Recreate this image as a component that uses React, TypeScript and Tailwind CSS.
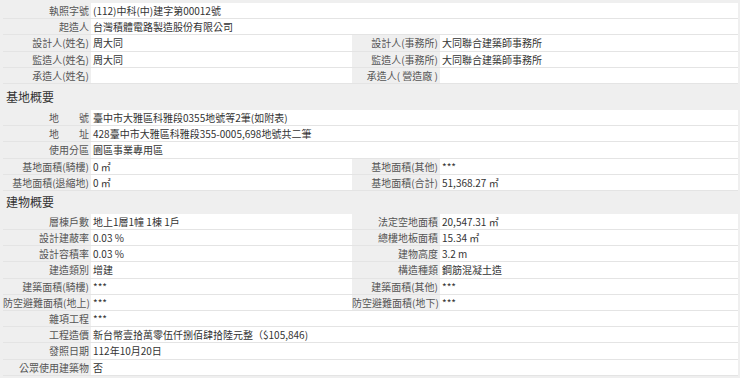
import React from 'react';

type Pair = [string, string];
type Row = { full?: Pair; left?: Pair; right?: Pair };

const font = { fontFamily: '"Noto Sans CJK TC", "Noto Sans", sans-serif' };

const top: Row[] = [
  { full: ['執照字號', '(112)中科(中)建字第00012號'] },
  { full: ['起造人', '台灣積體電路製造股份有限公司'] },
  { left: ['設計人(姓名)', '周大同'], right: ['設計人(事務所)', '大同聯合建築師事務所'] },
  { left: ['監造人(姓名)', '周大同'], right: ['監造人(事務所)', '大同聯合建築師事務所'] },
  { left: ['承造人(姓名)', ''], right: ['承造人( 營造廠 )', ''] },
];

const site: Row[] = [
  { full: ['地　　號', '臺中市大雅區科雅段0355地號等2筆(如附表)'] },
  { full: ['地　　址', '428臺中市大雅區科雅段355-0005,698地號共二筆'] },
  { full: ['使用分區', '園區事業專用區'] },
  { left: ['基地面積(騎樓)', '0 ㎡'], right: ['基地面積(其他)', '***'] },
  { left: ['基地面積(退縮地)', '0 ㎡'], right: ['基地面積(合計)', '51,368.27 ㎡'] },
];

const building: Row[] = [
  { left: ['層棟戶數', '地上1層1幢 1棟 1戶'], right: ['法定空地面積', '20,547.31 ㎡'] },
  { left: ['設計建蔽率', '0.03 %'], right: ['總樓地板面積', '15.34 ㎡'] },
  { left: ['設計容積率', '0.03 %'], right: ['建物高度', '3.2 m'] },
  { left: ['建造類別', '增建'], right: ['構造種類', '鋼筋混凝土造'] },
  { left: ['建築面積(騎樓)', '***'], right: ['建築面積(其他)', '***'] },
  { left: ['防空避難面積(地上)', '***'], right: ['防空避難面積(地下)', '***'] },
  { full: ['雜項工程', '***'] },
  { full: ['工程造價', '新台幣壹拾萬零伍仟捌佰肆拾陸元整（$105,846)'] },
  { full: ['發照日期', '112年10月20日'] },
  { full: ['公眾使用建築物', '否'] },
];

const Label: React.FC<{ text: string }> = ({ text }) => (
  <div className="w-[88px] shrink-0 bg-[#efefef] text-right pr-[2px] text-[#555] whitespace-pre">{text}</div>
);

const Value: React.FC<{ text: string; w?: string }> = ({ text, w }) => (
  <div className={`${w ?? 'flex-1'} bg-white pl-[2px] text-[#333] whitespace-pre`}>{text}</div>
);

const TableRow: React.FC<{ row: Row }> = ({ row }) => (
  <div className="flex h-[16.2px] leading-[15px] border-b border-[#e4e4e4]">
    {row.full ? (
      <>
        <Label text={row.full[0]} />
        <Value text={row.full[1]} />
      </>
    ) : (
      <>
        <Label text={row.left![0]} />
        <Value text={row.left![1]} w="w-[261px]" />
        <Label text={row.right![0]} />
        <Value text={row.right![1]} />
      </>
    )}
  </div>
);

const Section: React.FC<{ title: string; h: string }> = ({ title, h }) => (
  <div className={`${h} flex items-center pl-[3px] text-[12px] text-[#333] bg-[#efefef]`}>{title}</div>
);

export default function App() {
  return (
    <div className="w-[740px] h-[378px] bg-[#efefef] pt-[3px] pl-[3px] pr-[2px] text-[10px] overflow-hidden" style={font}>
      {top.map((r, i) => <TableRow key={'t' + i} row={r} />)}
      <Section title="基地概要" h="h-[26px]" />
      {site.map((r, i) => <TableRow key={'s' + i} row={r} />)}
      <Section title="建物概要" h="h-[23px]" />
      {building.map((r, i) => <TableRow key={'b' + i} row={r} />)}
    </div>
  );
}
